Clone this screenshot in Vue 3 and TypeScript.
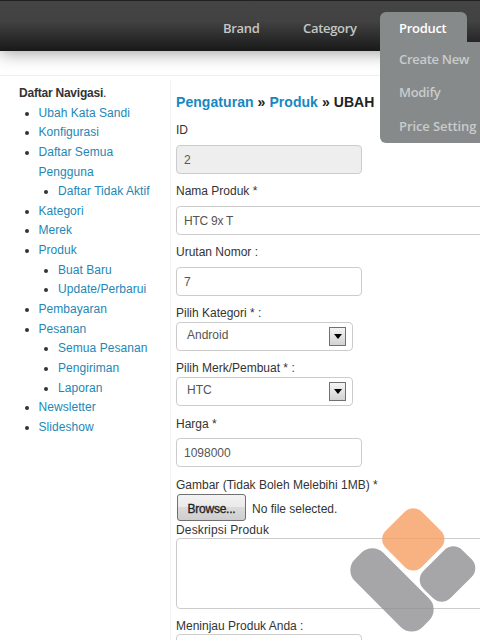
<script setup lang="ts">
interface NavItem {
  label: string
  children?: string[]
}

const topMenu: string[] = ['Brand', 'Category', 'Product']
const productMenu: string[] = ['Create New', 'Modify', 'Price Setting']

const navigation: NavItem[] = [
  { label: 'Ubah Kata Sandi' },
  { label: 'Konfigurasi' },
  { label: 'Daftar Semua Pengguna', children: ['Daftar Tidak Aktif'] },
  { label: 'Kategori' },
  { label: 'Merek' },
  { label: 'Produk', children: ['Buat Baru', 'Update/Perbarui'] },
  { label: 'Pembayaran' },
  { label: 'Pesanan', children: ['Semua Pesanan', 'Pengiriman', 'Laporan'] },
  { label: 'Newsletter' },
  { label: 'Slideshow' },
]
</script>

<template>
  <div class="page">
    <header class="topbar">
      <nav class="menu">
        <a v-for="item in topMenu" :key="item" :class="['menu-item', item.toLowerCase()]">{{ item }}</a>
      </nav>
      <div class="dropdown">
        <a v-for="item in productMenu" :key="item" class="dropdown-item">{{ item }}</a>
      </div>
    </header>

    <div class="content">
      <aside class="sidebar">
        <div class="side-title"><b>Daftar Navigasi</b>.</div>
        <ul class="nav">
          <li v-for="item in navigation" :key="item.label">
            <a>{{ item.label }}</a>
            <ul v-if="item.children" class="nav">
              <li v-for="child in item.children" :key="child"><a>{{ child }}</a></li>
            </ul>
          </li>
        </ul>
      </aside>

      <main class="main">
        <h1 class="crumbs"><a>Pengaturan</a> » <a>Produk</a> » UBAH</h1>

        <label class="label">ID</label>
        <div class="field disabled">2</div>

        <label class="label">Nama Produk *</label>
        <div class="field wide">HTC 9x T</div>

        <label class="label">Urutan Nomor :</label>
        <div class="field">7</div>

        <label class="label">Pilih Kategori * :</label>
        <div class="select">
          <span>Android</span>
          <i class="arrow"><svg width="8" height="5" viewBox="0 0 8 5"><path d="M0 0h8L4 5z" /></svg></i>
        </div>

        <label class="label">Pilih Merk/Pembuat * :</label>
        <div class="select">
          <span>HTC</span>
          <i class="arrow"><svg width="8" height="5" viewBox="0 0 8 5"><path d="M0 0h8L4 5z" /></svg></i>
        </div>

        <label class="label price-label">Harga *</label>
        <div class="field price">1098000</div>

        <label class="label image-label">Gambar (Tidak Boleh Melebihi 1MB) *</label>
        <div class="file">
          <button class="browse" type="button">Browse...</button>
          <span>No file selected.</span>
        </div>

        <label class="label desc-label">Deskripsi Produk</label>
        <div class="textarea"></div>

        <label class="label">Meninjau Produk Anda :</label>
        <div class="field review"></div>
      </main>
    </div>

    <svg class="logo" width="130" height="130" viewBox="348 506 130 130">
      <rect x="387.8" y="513.8" width="51" height="51" rx="12" fill="#f79f63" transform="rotate(45 413.3 539.3)" />
      <rect x="344.1" y="569.7" width="95.8" height="40.2" rx="15.5" fill="#919194" transform="rotate(45 392 589.8)" />
      <rect x="420.1" y="554.8" width="54.8" height="38.4" rx="12.5" fill="#919194" transform="rotate(-45 447.5 574)" />
    </svg>
  </div>
</template>

<style>
body {
  margin: 0;
  background: #fff;
}
</style>

<style scoped>
.page {
  position: relative;
  width: 480px;
  height: 640px;
  overflow: hidden;
  background: #fff;
  color: #333;
  font: 12px/19.64px "Liberation Sans", Arial, sans-serif;
}

.topbar {
  position: relative;
  box-sizing: border-box;
  height: 51px;
  border-top: 1px solid #202020;
  background: linear-gradient(#444 0%, #424242 40%, #191919 100%);
  box-shadow: 0 2px 16px rgba(0, 0, 0, 0.38);
  font: 600 13px/30px "Open Sans", "Noto Sans", sans-serif;
  letter-spacing: -0.3px;
  color: #c6c6c6;
}

.menu {
  display: flex;
  padding: 11px 0 0 203px;
}

.menu-item {
  box-sizing: border-box;
  height: 39px;
  padding-left: 20px;
  line-height: 32px;
}

.menu-item.brand {
  width: 80px;
}

.menu-item.category {
  width: 97px;
}

.menu-item.product {
  width: 87px;
  padding-left: 19px;
  border-radius: 6px 6px 0 0;
  background: #868a8b;
  color: #fff;
}

.dropdown {
  position: absolute;
  top: 41px;
  left: 380px;
  box-sizing: border-box;
  width: 130px;
  height: 101px;
  padding: 0 0 0 19px;
  border-radius: 0 6px 6px 6px;
  background: #868a8b;
  color: #c9cccc;
  white-space: nowrap;
}

.dropdown-item {
  display: block;
  height: 33.3px;
  line-height: 34px;
}

.dropdown-item:last-child {
  letter-spacing: -0.1px;
}

.content {
  display: flex;
  height: 564px;
  margin-top: 24px;
  border-top: 1px solid #eee;
}

.sidebar {
  box-sizing: border-box;
  flex: none;
  width: 170px;
  padding: 8px 0 0 19px;
}

.side-title {
  color: #333;
  letter-spacing: -0.22px;
}

.nav {
  margin: 0;
  padding-left: 19.5px;
  list-style: disc;
}

.nav a {
  color: #2287b5;
  letter-spacing: 0.05px;
}

.sidebar > .nav {
  width: 112px;
}

.nav .nav {
  white-space: nowrap;
}

.main {
  box-sizing: border-box;
  flex: none;
  width: 360px;
  margin-top: 4px;
  padding: 12px 0 0 5px;
  border-left: 1px solid #f3f3f3;
}

.crumbs {
  height: 20px;
  margin: 0 0 10px;
  color: #222;
  font-size: 14px;
  font-weight: bold;
  line-height: 20px;
  letter-spacing: 0.06px;
  white-space: nowrap;
}

.crumbs a {
  color: #1787c2;
}

.label {
  display: block;
  height: 16px;
  line-height: 16px;
  white-space: nowrap;
}

.field,
.select,
.textarea {
  box-sizing: border-box;
  border: 1px solid #ccc;
  border-radius: 4px;
  background: #fff;
  color: #555;
}

.field {
  width: 186px;
  height: 29px;
  margin: 7px 0 9px;
  padding-left: 7px;
  line-height: 29px;
}

.field.disabled {
  background: #eee;
}

.field.wide,
.textarea {
  width: 340px;
}

.field.wide {
  letter-spacing: -0.25px;
}

.field.price {
  margin: 6px 0 0;
}

.field.review {
  margin: 0;
}

.select {
  display: flex;
  justify-content: space-between;
  width: 177px;
  height: 29px;
  margin: 1px 0 9px;
  padding: 4px 6px 0 10px;
  line-height: 17px;
}

.arrow {
  display: flex;
  align-items: center;
  justify-content: center;
  box-sizing: border-box;
  width: 17px;
  height: 19px;
  border: 1px solid #707070;
  background: linear-gradient(#f4f4f4, #d2d2d2);
}

.price-label,
.image-label {
  margin-top: 10px;
}

.file {
  display: flex;
  align-items: center;
  gap: 6px;
  height: 27px;
  margin-top: 1px;
  padding-left: 1px;
  line-height: 31px;
}

.file span {
  padding-top: 3px;
}

.browse {
  box-sizing: border-box;
  width: 69px;
  height: 27px;
  padding: 3px 0 0;
  border: 1px solid #707070;
  border-radius: 3px;
  background: linear-gradient(#f3f3f3, #e9e9e9 50%, #dadada 50%, #cecece);
  color: #222;
  font: 12px "Liberation Sans", Arial, sans-serif;
  letter-spacing: -0.25px;
  -webkit-text-stroke: 0.3px #222;
}

.desc-label {
  margin-top: 1px;
  letter-spacing: 0.15px;
}

.textarea {
  height: 71px;
  margin-bottom: 9px;
}

.logo {
  position: absolute;
  top: 506px;
  left: 348px;
  opacity: 0.8;
}
</style>
